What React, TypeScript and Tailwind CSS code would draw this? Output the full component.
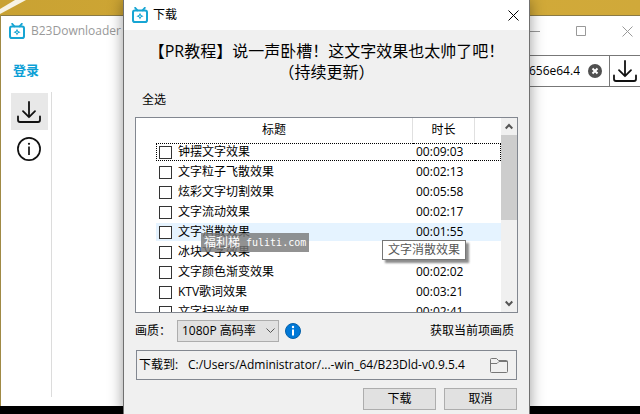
import type { ReactNode } from "react";

interface Episode {
    title: string;
    duration: string;
    focused?: boolean;
    hovered?: boolean;
}

const episodes: Episode[] = [
    { title: "钟摆文字效果", duration: "00:09:03", focused: true },
    { title: "文字粒子飞散效果", duration: "00:02:13" },
    { title: "炫彩文字切割效果", duration: "00:05:58" },
    { title: "文字流动效果", duration: "00:02:17" },
    { title: "文字消散效果", duration: "00:01:55", hovered: true },
    { title: "冰块文字效果", duration: "00:01:48" },
    { title: "文字颜色渐变效果", duration: "00:02:02" },
    { title: "KTV歌词效果", duration: "00:03:21" },
    { title: "文字扫光效果", duration: "00:02:41" },
];

const AppLogo = () => (
    <svg width="16" height="16" viewBox="0 0 16 16" fill="none" stroke="#17a5d3" className="shrink-0">
        <rect x="1" y="3.6" width="14" height="11.4" rx="1.8" strokeWidth="2" />
        <path d="M3.2 0.8l2.2 2.6M12.8 0.8l-2.2 2.6" strokeWidth="1.8" strokeLinecap="round" />
        <path d="M8 5.8l1.1 2.3 2.5 1.1-2.5 1.1L8 12.6l-1.1-2.3-2.5-1.1 2.5-1.1z" fill="#17a5d3" stroke="none" />
        <circle cx="8" cy="9.2" r="0.8" fill="#fff" stroke="none" />
    </svg>
);

const DownloadIcon = () => (
    <svg width="24" height="24" viewBox="0 0 24 24" fill="none" stroke="#111" strokeWidth="1.8" strokeLinecap="round" strokeLinejoin="round">
        <path d="M12 2v15M6 11.2l6 6 6-6" />
        <path d="M1 16.5v3.5q0 2 2 2h18q2 0 2-2v-3.5" />
    </svg>
);

const CloseIcon = () => (
    <svg width="11" height="11" viewBox="0 0 11 11" fill="none" stroke="currentColor">
        <path d="M0.5 0.5l10 10M10.5 0.5l-10 10" />
    </svg>
);

const Chevron = ({ className }: { className?: string }) => (
    <svg width="8" height="7" viewBox="0 0 8 7" fill="none" stroke="#555" strokeWidth="2" className={className}>
        <path d="M0.7 5.5L4 2l3.3 3.5" />
    </svg>
);

const DialogButton = ({ children }: { children: ReactNode }) => (
    <button type="button" className="h-[22px] w-[73px] border border-[#adadad] bg-[#e1e1e1] leading-5">
        {children}
    </button>
);

const MainWindow = () => (
    <div className="ml-px flex flex-1 flex-col border-t border-[#8a7a45] bg-white">
        <header className="-mr-2.5 flex h-[30px] items-center pl-2 text-[#999]">
            <AppLogo />
            <h1 className="ml-1.5 flex-1">B23Downloader</h1>
            <button type="button" aria-label="最小化" className="flex w-[46px] justify-center">
                <svg width="10" height="10" viewBox="0 0 10 10" stroke="currentColor">
                    <path d="M0 5.5h10" />
                </svg>
            </button>
            <button type="button" aria-label="最大化" className="flex w-[46px] justify-center">
                <svg width="10" height="10" viewBox="0 0 10 10" fill="none" stroke="currentColor">
                    <path d="M0.5 0.5h9v9h-9z" />
                </svg>
            </button>
            <button type="button" aria-label="关闭" className="flex w-[46px] justify-center">
                <CloseIcon />
            </button>
        </header>
        <div className="mt-[9px] flex h-8 items-stretch">
            <a href="#login" className="flex w-[130px] items-center pl-3 text-[13px] font-bold text-[#0d9fd6]">
                登录
            </a>
            <div className="flex flex-1 items-center border-y border-[#777] pr-[7px]">
                <input type="text" aria-label="链接" defaultValue="656e64.4" className="min-w-0 flex-1 text-right outline-none" />
                <button type="button" aria-label="清空" className="ml-2">
                    <svg width="14" height="14" viewBox="0 0 14 14" fill="none">
                        <circle cx="7" cy="7" r="7" fill="#505050" />
                        <path d="M4.5 4.5l5 5M9.5 4.5l-5 5" stroke="#fff" strokeWidth="2" />
                    </svg>
                </button>
            </div>
            <button type="button" aria-label="下载" className="flex w-[31px] items-center justify-center border-y border-l border-[#777]">
                <DownloadIcon />
            </button>
        </div>
        <div className="flex flex-1 pt-[5px] pb-[9px]">
            <nav className="flex w-[51px] flex-col items-center border-r border-[#dcdcdc] pt-px pl-1.5">
                <button type="button" aria-label="下载列表" className="flex size-[37px] items-center justify-center bg-[#e8e8e8]">
                    <DownloadIcon />
                </button>
                <button type="button" aria-label="关于" className="flex size-[37px] items-center justify-center">
                    <svg width="24" height="24" viewBox="0 0 24 24" fill="none" stroke="#111">
                        <circle cx="12" cy="12" r="11.1" strokeWidth="1.7" />
                        <path d="M12 9.5v8.5" strokeWidth="1.7" />
                        <circle cx="12" cy="6.8" r="1.1" fill="#111" stroke="none" />
                    </svg>
                </button>
            </nav>
        </div>
    </div>
);

const EpisodeRow = ({ title, duration, focused, hovered }: Episode) => {
    const fill = hovered ? "bg-[#e5f3ff]" : "";
    const edge = focused ? "border-black" : "border-transparent";

    return (
        <tr>
            <td />
            <td className="py-px">
                <label className={`relative flex h-[18px] items-center gap-1.5 border-y border-l border-dotted pl-0.5 ${fill} ${edge}`}>
                    <input type="checkbox" className="size-[13px] appearance-none border border-[#333] bg-white" />
                    {title}
                    {hovered && (
                        <span
                            role="tooltip"
                            className="absolute top-full -right-[53px] z-10 border border-[#767676] bg-white px-[5px] leading-[18px] text-[#575757] shadow-[3px_3px_2px_#8c8c8c]"
                        >
                            {title}
                        </span>
                    )}
                </label>
            </td>
            <td className="py-px">
                <div className={`h-[18px] border-y border-dotted pl-[3px] leading-4 ${fill} ${edge}`}>{duration}</div>
            </td>
            <td className="py-px">
                <div className={`h-[18px] border-y border-r border-dotted ${fill} ${edge}`} />
            </td>
        </tr>
    );
};

const EpisodeList = () => (
    <div className="flex h-[196px] overflow-hidden border border-[#828790] bg-white">
        <div className="flex-1">
            <table className="w-full table-fixed border-separate border-spacing-0">
                <colgroup>
                    <col className="w-5" />
                    <col />
                    <col className="w-[62px]" />
                    <col className="w-[26px]" />
                </colgroup>
                <thead>
                    <tr className="h-6">
                        <th colSpan={2} className="border-r border-[#e0e0e0] font-normal">
                            标题
                        </th>
                        <th className="border-r border-[#e0e0e0] font-normal">时长</th>
                        <td />
                    </tr>
                </thead>
                <tbody>
                    {episodes.map((episode) => (
                        <EpisodeRow key={episode.title} {...episode} />
                    ))}
                </tbody>
            </table>
        </div>
        <div className="flex w-4 flex-col items-center bg-[#f0f0f0]">
            <div className="flex h-[17px] items-center">
                <Chevron />
            </div>
            <div className="h-[85px] w-full bg-[#cdcdcd]" />
            <div className="mt-auto flex h-[17px] items-center">
                <Chevron className="rotate-180" />
            </div>
        </div>
    </div>
);

const DownloadDialog = () => (
    <div
        role="dialog"
        aria-label="下载"
        className="absolute inset-y-0 right-[110px] left-[123px] border-x border-[#707070] bg-[#f0f0f0] shadow-[0_0_14px_rgba(0,0,0,0.4)]"
    >
        <header className="flex h-[30px] items-center bg-white pr-2.5 pl-2">
            <AppLogo />
            <span className="ml-[5px] flex-1">下载</span>
            <button type="button" aria-label="关闭">
                <CloseIcon />
            </button>
        </header>
        <div className="flex flex-col px-[11px] pt-[11px]">
            <h2 className="text-center text-base leading-[21px]">
                【PR教程】说一声卧槽！这文字效果也太帅了吧！
                <br />
                （持续更新）
            </h2>
            <button type="button" className="my-2 self-start pl-[7px] leading-[18px]">
                全选
            </button>
            <EpisodeList />
            <div className="mt-[7px] flex h-[22px] items-center">
                <label htmlFor="quality" className="w-[42px]">
                    画质：
                </label>
                <div className="relative h-full w-[102px]">
                    <select id="quality" className="size-full appearance-none border border-[#adadad] bg-[#e1e1e1] pl-1 leading-5">
                        <option>1080P 高码率</option>
                    </select>
                    <svg width="9" height="6" viewBox="0 0 9 6" fill="none" stroke="#555" className="pointer-events-none absolute top-2 right-1">
                        <path d="M0.5 0.5l4 4 4-4" />
                    </svg>
                </div>
                <svg width="16" height="16" viewBox="0 0 16 16" className="ml-1.5">
                    <circle cx="8" cy="8" r="7.5" fill="#0078d7" stroke="#0560a8" />
                    <path d="M8 6.5v6" stroke="#fff" strokeWidth="2" />
                    <circle cx="8" cy="4" r="1.2" fill="#fff" />
                </svg>
                <button type="button" className="ml-auto pr-1">
                    获取当前项画质
                </button>
            </div>
            <div className="mx-px mt-2 flex h-[30px] items-center border border-[#828790] pr-2 pl-0.5">
                <label htmlFor="path" className="w-[49px]">
                    下载到:
                </label>
                <input
                    id="path"
                    type="text"
                    readOnly
                    value="C:/Users/Administrator/...-win_64/B23Dld-v0.9.5.4"
                    className="min-w-0 flex-1 outline-none"
                />
                <button type="button" aria-label="选择文件夹">
                    <svg width="18" height="15" viewBox="0 0 18 15" fill="none" stroke="#777">
                        <path d="M0.5 13.5v-12q0-1 1-1h5l2 2h8q1 0 1 1v10q0 1-1 1h-15q-1 0-1-1z" />
                        <path d="M0.5 5.5h6.5l2-2h8.5" />
                    </svg>
                </button>
            </div>
            <div className="mx-px mt-2 flex justify-end gap-2">
                <DialogButton>下载</DialogButton>
                <DialogButton>取消</DialogButton>
            </div>
        </div>
    </div>
);

const App = () => (
    <div className="relative flex h-screen flex-col overflow-hidden bg-[#a08a45] font-['Open_Sans','Noto_Sans_CJK_SC',sans-serif] text-xs text-black">
        <div className="h-[15px] bg-linear-to-r from-[#c9a233] via-[#d3a935] to-[#d0a93a]">
            <svg width="40" height="15" viewBox="0 0 40 15">
                <path d="M0 9L15 0h11L0 14z" fill="#f7f3e4" />
            </svg>
        </div>
        <MainWindow />
        <div className="h-2 bg-black" />
        <DownloadDialog />
        <div className="absolute top-[233px] left-[201px] flex gap-1.5 bg-[#777]/80 px-[3px] leading-[19px] text-white">
            <span>福利梯</span>
            <span className="font-['DejaVu_Sans_Mono',monospace] text-[10px]">fuliti.com</span>
        </div>
    </div>
);

export default App;
